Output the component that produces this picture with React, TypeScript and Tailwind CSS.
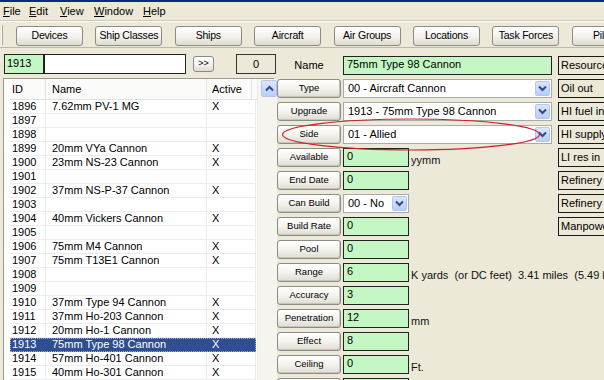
import React from "react";

const rows: [string, string, string][] = [
  ["1896", "7.62mm PV-1 MG", "X"],
  ["1897", "", ""],
  ["1898", "", ""],
  ["1899", "20mm VYa Cannon", "X"],
  ["1900", "23mm NS-23 Cannon", "X"],
  ["1901", "", ""],
  ["1902", "37mm NS-P-37 Cannon", "X"],
  ["1903", "", ""],
  ["1904", "40mm Vickers Cannon", "X"],
  ["1905", "", ""],
  ["1906", "75mm M4 Cannon", "X"],
  ["1907", "75mm T13E1 Cannon", "X"],
  ["1908", "", ""],
  ["1909", "", ""],
  ["1910", "37mm Type 94 Cannon", "X"],
  ["1911", "37mm Ho-203 Cannon", "X"],
  ["1912", "20mm Ho-1 Cannon", "X"],
  ["1913", "75mm Type 98 Cannon", "X"],
  ["1914", "57mm Ho-401 Cannon", "X"],
  ["1915", "40mm Ho-301 Cannon", "X"],
];

function Chevron({ up = false }: { up?: boolean }) {
  return (
    <svg width="9" height="7" viewBox="0 0 9 7">
      <path
        d={up ? "M1 5.5 L4.5 2 L8 5.5" : "M1 1.5 L4.5 5 L8 1.5"}
        fill="none"
        stroke="#2b4a8a"
        strokeWidth="2"
      />
    </svg>
  );
}

function XPButton({ children, className = "" }: { children?: React.ReactNode; className?: string }) {
  return (
    <div
      className={
        "flex items-center justify-center shrink-0 rounded-[3px] border border-[#8c8c86] bg-linear-to-b from-[#ffffff] via-[#f4f3ee] to-[#dedcd2] text-black whitespace-nowrap " +
        className
      }
    >
      {children}
    </div>
  );
}

function LabelBtn({ label }: { label: string }) {
  return <XPButton className="w-[64px] h-[19px] text-[9.5px] shadow-[inset_-1px_-1px_0_#c8c6bc]">{label}</XPButton>;
}

function Green({ value, w }: { value: string; w: string }) {
  return (
    <div className={"h-[19px] shrink-0 border border-[#222] bg-[#c4f7c4] pl-[3px] text-[11px] leading-[15px] whitespace-nowrap overflow-hidden " + w}>
      {value}
    </div>
  );
}

function Select({ value, w }: { value: string; w: string }) {
  return (
    <div className={"h-[19px] shrink-0 border border-[#a7abb0] bg-white flex items-center justify-between pl-[4px] pr-[1px] text-[11px] " + w}>
      <span className="whitespace-nowrap overflow-hidden">{value}</span>
      <div className="w-[15px] h-[15px] flex items-center justify-center rounded-[2px] border border-[#b4c6f0] bg-linear-to-b from-[#dbe6ff] to-[#b9cdf7] shrink-0">
        <Chevron />
      </div>
    </div>
  );
}

function Note({ children }: { children: React.ReactNode }) {
  return <span className="ml-[2px] shrink-0 self-end text-[11px] leading-[14px] whitespace-pre text-[#111]">{children}</span>;
}

export default function App() {
  const formRows: { label: string; plain?: boolean; field: React.ReactNode; note?: string }[] = [
    { label: "Name", plain: true, field: <Green value="75mm Type 98 Cannon" w="w-[209px]" /> },
    { label: "Type", field: <Select value="00 - Aircraft Cannon" w="w-[209px]" /> },
    { label: "Upgrade", field: <Select value="1913 - 75mm Type 98 Cannon" w="w-[209px]" /> },
    { label: "Side", field: <Select value="01 - Allied" w="w-[209px]" /> },
    { label: "Available", field: <Green value="0" w="w-[66px]" />, note: "yymm" },
    { label: "End Date", field: <Green value="0" w="w-[66px]" /> },
    { label: "Can Build", field: <Select value="00 - No" w="w-[66px]" /> },
    { label: "Build Rate", field: <Green value="0" w="w-[66px]" /> },
    { label: "Pool", field: <Green value="0" w="w-[66px]" /> },
    { label: "Range", field: <Green value="6" w="w-[66px]" />, note: "K yards  (or DC feet)  3.41 miles  (5.49 km)" },
    { label: "Accuracy", field: <Green value="3" w="w-[66px]" /> },
    { label: "Penetration", field: <Green value="12" w="w-[66px]" />, note: "mm" },
    { label: "Effect", field: <Green value="8" w="w-[66px]" /> },
    { label: "Ceiling", field: <Green value="0" w="w-[66px]" />, note: "Ft." },
    { label: "", field: <Green value="" w="w-[66px]" /> },
  ];

  const rightBoxes = ["Resources", "Oil out", "HI fuel in", "HI supply", "LI res in", "Refinery", "Refinery", "Manpower"];

  const tools = ["Devices", "Ship Classes", "Ships", "Aircraft", "Air Groups", "Locations", "Task Forces", "Pilots"];

  return (
    <div className="relative w-[604px] h-[380px] overflow-hidden bg-[#ece9d8] text-black font-['Liberation_Sans',Arial,sans-serif]">
      {/* title bar edge */}
      <div className="h-[2px] bg-[#0c2b7c]" />
      {/* menu */}
      <div className="h-[19px] flex items-center pl-[3px] text-[11px] border-b border-[#cbc8b8]">
        <span className="w-[26px]"><u>F</u>ile</span>
        <span className="w-[31px]"><u>E</u>dit</span>
        <span className="w-[34px]"><u>V</u>iew</span>
        <span className="w-[49px]"><u>W</u>indow</span>
        <span><u>H</u>elp</span>
      </div>
      {/* toolbar */}
      <div className="h-[27px] flex items-center gap-[12.4px] pl-[16px] border-t border-white border-b border-b-[#bdbaa8] relative">
        <div className="absolute left-[1px] top-[3px] w-[2px] h-[20px] border-l border-white border-r border-r-[#a8a596]" />
        {tools.map((t) => (
          <XPButton key={t} className="w-[67px] h-[20px] text-[10.5px] tracking-[-0.2px] mt-[2px]">
            {t}
          </XPButton>
        ))}
      </div>

      {/* main */}
      <div className="flex">
        {/* left panel */}
        <div className="w-[277px] shrink-0 pl-[3px]">
          <div className="mt-[6px] h-[20px] flex items-center pl-[1px]">
            <div className="w-[40px] h-[20px] border border-[#222] bg-[#c4f7c4] text-[11px] pl-[2px] leading-[17px]">1913</div>
            <div className="w-[142px] h-[20px] border border-[#222] bg-white" />
            <XPButton className="ml-[7px] w-[21px] h-[16px] text-[9px]">&gt;&gt;</XPButton>
            <div className="ml-[22px] w-[40px] h-[20px] border border-[#333] bg-[#ece9d8] text-[11px] flex items-center justify-center">0</div>
          </div>
          {/* list */}
          <div className="mt-[4px] w-[271px] h-[320px] border border-[#9c9a90] bg-white flex text-[11px]">
            <div className="w-[253px] shrink-0">
              <div className="h-[21px] flex border-b border-[#e2e2e2] bg-[#fbfbf9] ml-[6px]">
                <div className="w-[36px] pl-[2px] leading-[20px] border-r border-[#e2e2e2]">ID</div>
                <div className="w-[161px] pl-[6px] leading-[20px] border-r border-[#e2e2e2]">Name</div>
                <div className="w-[45px] pl-[5px] leading-[20px] border-r border-[#e2e2e2]">Active</div>
              </div>
              {rows.map(([id, name, act]) => {
                const sel = id === "1913";
                return (
                  <div
                    key={id}
                    className={
                      "h-[14px] flex ml-[6px] w-[246px] " +
                      (sel ? "bg-[#2f4e92] text-white outline outline-1 outline-dotted outline-[#9fb0d8] -outline-offset-1" : "border-b border-[#ececec]")
                    }
                  >
                    <div className={"w-[36px] pl-[2px] leading-[13px] " + (sel ? "" : "border-r border-[#ececec]")}>{id}</div>
                    <div className={"w-[161px] pl-[6px] leading-[13px] whitespace-nowrap " + (sel ? "" : "border-r border-[#ececec]")}>{name}</div>
                    <div className={"w-[49px] pl-[5px] leading-[13px] " + (sel ? "" : "border-r border-[#ececec]")}>{act}</div>
                  </div>
                );
              })}
            </div>
            <div className="flex-1 bg-[#f5f4ef] border-l border-[#eceae2] pt-[1px] pl-[3px]">
              <div className="w-[16px] h-[17px] rounded-[2px] border border-[#b4c6f0] bg-linear-to-b from-[#dce7ff] to-[#bacdf6] flex items-center justify-center">
                <Chevron up />
              </div>
            </div>
          </div>
        </div>

        {/* middle form */}
        <div className="w-[281px] shrink-0 pt-[8px] flex flex-col gap-[4px]">
          {formRows.map((r, i) => (
            <div key={i} className="h-[19px] flex items-stretch">
              {r.plain ? (
                <div className="w-[64px] shrink-0 flex items-center justify-center text-[11px]">{r.label}</div>
              ) : (
                <LabelBtn label={r.label} />
              )}
              <div className="ml-[2px] flex shrink-0">
                {r.field}
                {r.note && <Note>{r.note}</Note>}
              </div>
            </div>
          ))}
        </div>

        {/* right column */}
        <div className="pt-[8px] flex flex-col gap-[4px]">
          {rightBoxes.map((b, i) => (
            <div key={i} className="w-[60px] h-[19px] border border-[#1a1a1a] pl-[2px] text-[11px] leading-[17px] whitespace-nowrap overflow-hidden">
              {b}
            </div>
          ))}
        </div>
      </div>

      {/* red ellipse annotation */}
      <svg className="absolute left-0 top-0 pointer-events-none" width="604" height="380">
        <ellipse cx="411" cy="134.5" rx="128.5" ry="15.5" fill="none" stroke="#cc1f2a" strokeWidth="1.2" />
      </svg>
    </div>
  );
}
